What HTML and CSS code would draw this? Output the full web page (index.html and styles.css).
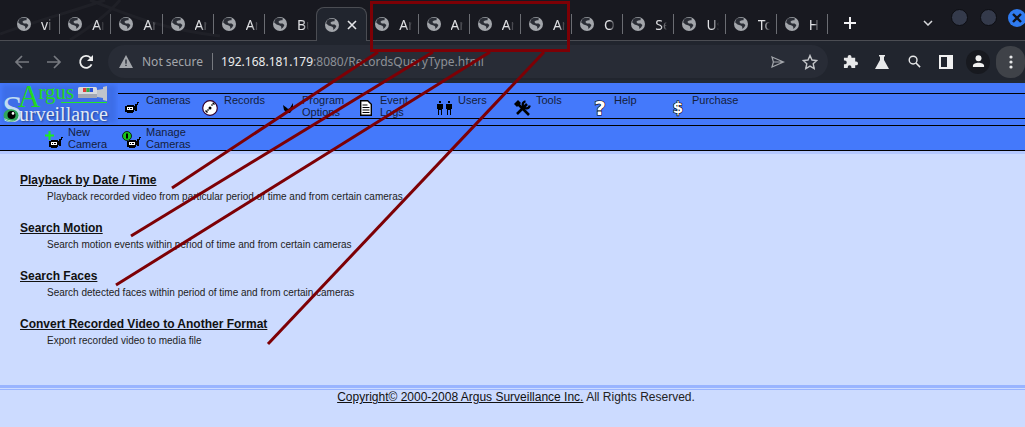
FILE: index.html
```html
<!DOCTYPE html>
<html>
  <head>
    <title>Argus Surveillance</title>
    <link rel="stylesheet" href="styles.css">
  </head>
  <body>
    <svg class="defs" width="0" height="0">
      <symbol id="globe" viewBox="0 0 14 14">
        <circle cx="7" cy="7" r="7" fill="#a3a6ab"/>
        <path d="M3 1.600C5 .6 8 .4 10 1.400L9.200 3.400C7.400 3 6.200 3.800 5.400 5L6.800 6.600 9.600 6.400 11.400 8C10.800 10 9.400 11.200 8.200 12 8.600 10.400 8.200 9 6.600 8.600L3.600 7.400 1.200 5.600C1.400 4 2 2.600 3 1.600Z" fill="#2a2d35"/>
      </symbol>
      <symbol id="camera" viewBox="0 0 14 11">
        <path d="M0 4h2V3h7v1h1V2h2V0h2v1h-1v2h-1v6h-2V8H9v2H8v1H2v-1H0Z" fill="#000"/>
        <path d="M2 5h6v3H2Z" fill="#fff"/>
        <path d="M3 6h1v1H3ZM5 6h2v1H5Z" fill="#000"/>
      </symbol>
    </svg>

    <header class="browser">
      <div class="tabstrip">
        <svg class="dragon" viewBox="0 0 400 40" width="400" height="40">
          <path d="M0 34C40 20 70 12 105 0M70 40C95 24 110 12 120 0M90 0C140 20 170 30 220 36" fill="none" stroke="#1f2027" stroke-width="3"/>
        </svg>
        <div class="tab"><svg class="favicon"><use href="#globe"/></svg><span class="tab-title">vi</span></div>
        <div class="tab"><svg class="favicon"><use href="#globe"/></svg><span class="tab-title">Ar</span></div>
        <div class="tab"><svg class="favicon"><use href="#globe"/></svg><span class="tab-title">Ar</span></div>
        <div class="tab"><svg class="favicon"><use href="#globe"/></svg><span class="tab-title">Ar</span></div>
        <div class="tab"><svg class="favicon"><use href="#globe"/></svg><span class="tab-title">Ar</span></div>
        <div class="tab tab-last"><svg class="favicon"><use href="#globe"/></svg><span class="tab-title">Bu</span></div>
        <div class="tab tab-active">
          <svg class="favicon"><use href="#globe"/></svg>
          <svg class="tab-close" viewBox="0 0 10 10" width="10" height="10"><path d="M1 1l8 8M9 1l-8 8" stroke="#e4e5e8" stroke-width="1.600"/></svg>
        </div>
        <div class="tab"><svg class="favicon"><use href="#globe"/></svg><span class="tab-title">Ar</span></div>
        <div class="tab"><svg class="favicon"><use href="#globe"/></svg><span class="tab-title">Ar</span></div>
        <div class="tab"><svg class="favicon"><use href="#globe"/></svg><span class="tab-title">Ar</span></div>
        <div class="tab"><svg class="favicon"><use href="#globe"/></svg><span class="tab-title">Ar</span></div>
        <div class="tab"><svg class="favicon"><use href="#globe"/></svg><span class="tab-title">O</span></div>
        <div class="tab"><svg class="favicon"><use href="#globe"/></svg><span class="tab-title">Se</span></div>
        <div class="tab"><svg class="favicon"><use href="#globe"/></svg><span class="tab-title">Us</span></div>
        <div class="tab"><svg class="favicon"><use href="#globe"/></svg><span class="tab-title">To</span></div>
        <div class="tab"><svg class="favicon"><use href="#globe"/></svg><span class="tab-title">H</span></div>
        <svg class="new-tab" viewBox="0 0 12 12" width="12" height="12"><path d="M6 0v12M0 6h12" stroke="#f1f1f3" stroke-width="2"/></svg>
        <svg class="tab-search" viewBox="0 0 10 6" width="10" height="6"><path d="M1 1l4 4 4-4" fill="none" stroke="#d8d9dc" stroke-width="1.500"/></svg>
        <span class="win-btn"></span>
        <span class="win-btn"></span>
        <span class="win-btn win-close">
          <svg viewBox="0 0 10 10" width="10" height="10"><path d="M1 1l8 8M9 1l-8 8" stroke="#10131c" stroke-width="2.400"/></svg>
        </span>
      </div>

      <div class="toolbar">
        <span class="tool-btn">
          <svg viewBox="0 0 16 16" width="16" height="16"><path d="M15 8H2M8 2L2 8l6 6" fill="none" stroke="#777a80" stroke-width="1.700"/></svg>
        </span>
        <span class="tool-btn">
          <svg viewBox="0 0 16 16" width="16" height="16"><path d="M1 8h13M8 2l6 6-6 6" fill="none" stroke="#777a80" stroke-width="1.700"/></svg>
        </span>
        <span class="tool-btn">
          <svg viewBox="0 0 16 16" width="16" height="16"><path d="M13.600 10.400A6 6 0 1 1 12.400 3.600L14 5.400" fill="none" stroke="#eceded" stroke-width="1.800"/><path d="M15 1v6H9Z" fill="#eceded"/></svg>
        </span>
        <div class="omnibox">
          <svg class="warn" viewBox="0 0 14 13" width="14" height="13"><path d="M7 0l7 13H0Z" fill="#a3a6ab"/><path d="M6.300 4.500h1.400v4.200H6.300ZM6.300 9.700h1.400v1.400H6.300Z" fill="#2a2e38"/></svg>
          <span class="not-secure">Not secure</span>
          <span class="url"><span class="url-host">192.168.181.179</span>:8080/RecordsQueryType.html</span>
          <svg class="send" viewBox="0 0 14 12" width="14" height="12"><path d="M1 1l11.500 5L1 11l1.400-5ZM2.400 6h10" fill="none" stroke="#a3a6ab" stroke-width="1.200"/></svg>
          <svg class="star" viewBox="0 0 16 16" width="16" height="16"><path d="M8 1.500l2 4.500 4.800.5-3.600 3.200 1 4.800L8 12.100l-4.200 2.400 1-4.800L1.200 6.500 6 6Z" fill="none" stroke="#c4c6c9" stroke-width="1.400"/></svg>
        </div>
        <span class="tool-btn">
          <svg viewBox="0 0 16 16" width="15" height="15"><path d="M1 4h4V3a2 2 0 0 1 4 0v1h4v4h1a2 2 0 0 1 0 4h-1v3H9v-1a2 2 0 0 0-4 0v1H1v-4h1a2 2 0 0 0 0-4H1Z" fill="#e8e9ea"/></svg>
        </span>
        <span class="tool-btn">
          <svg viewBox="0 0 16 16" width="16" height="16"><path d="M5 1h6v1.500h-1V6l5 9H1l5-9V2.500H5Z" fill="#e8e9ea"/></svg>
        </span>
        <span class="tool-btn">
          <svg viewBox="0 0 14 14" width="13" height="13"><circle cx="5.500" cy="5.500" r="4.200" fill="none" stroke="#e8e9ea" stroke-width="1.500"/><path d="M8.600 8.600L13 13" stroke="#e8e9ea" stroke-width="1.700"/></svg>
        </span>
        <span class="tool-btn">
          <svg viewBox="0 0 14 14" width="14" height="14"><path d="M0 0h14v14H0ZM2 2v10h6V2Z" fill="#f1f1f1" fill-rule="evenodd"/></svg>
        </span>
        <span class="tool-btn">
          <span class="avatar">
            <svg viewBox="0 0 14 14" width="13" height="13"><circle cx="7" cy="3.500" r="3.200" fill="#f1f1f1"/><path d="M1 13v-1.500C1 9.500 4 8.300 7 8.300s6 1.200 6 3.200V13Z" fill="#f1f1f1"/></svg>
          </span>
        </span>
        <span class="tool-btn tool-menu">
          <svg viewBox="0 0 4 14" width="4" height="14"><circle cx="2" cy="2" r="1.600" fill="#e8e9ea"/><circle cx="2" cy="7" r="1.600" fill="#e8e9ea"/><circle cx="2" cy="12" r="1.600" fill="#e8e9ea"/></svg>
        </span>
      </div>
    </header>

    <div class="page">
      <div class="banner">
        <div class="logo">
          <span class="logo-big-s">S</span>
          <span class="logo-argus">A<span class="logo-argus-rest">rgus</span></span>
          <span class="logo-rule"></span>
          <span class="logo-surveillance">urveillance</span>
          <svg class="logo-eye" viewBox="0 0 16 13" width="16" height="13">
            <ellipse cx="8" cy="6.500" rx="7.500" ry="6.200" fill="#2fa65a"/>
            <path d="M1 9c2 3 8 4 11 2.500C8 12 4 11 1 9Z" fill="#d8f0e0"/>
            <circle cx="8.500" cy="6" r="4" fill="#000"/>
            <circle cx="10" cy="4.400" r="1.300" fill="#fff"/>
          </svg>
          <svg class="logo-cam" viewBox="0 0 30 15" width="30" height="15">
            <rect x="0" y="1" width="19" height="11" rx="1.500" fill="#d8dade"/>
            <rect x="0" y="8" width="19" height="4" fill="#a4a8b2"/>
            <rect x="5" y="2" width="3.400" height="4" fill="#e03a3a"/>
            <rect x="8.400" y="2" width="3.300" height="4" fill="#32b045"/>
            <rect x="11.700" y="2" width="3.300" height="4" fill="#2a4fd8"/>
            <path d="M19 4l6-1V1l4-1v15l-4-1v-2l-6-1Z" fill="#c0c4cb"/>
          </svg>
        </div>
        <nav class="menu">
          <a class="menu-item"><span class="menu-icon"><svg width="14" height="11"><use href="#camera"/></svg></span><span>Cameras</span></a>
          <a class="menu-item"><span class="menu-icon">
            <svg viewBox="0 0 16 16" width="16" height="16"><circle cx="8" cy="8" r="7.300" fill="#fff" stroke="#300030" stroke-width="1.200"/><circle cx="8" cy="8" r="1.500" fill="#000"/><path d="M3 11l2 2 1-1-2-2ZM10 3l2 2 1-1-1.500-1.500ZM9 5l1 1 1-1-1-1ZM5 10l1 1 1-1-1-1Z" fill="#000"/></svg>
          </span><span>Records</span></a>
          <a class="menu-item"><span class="menu-icon">
            <svg viewBox="0 0 10 10" width="10" height="10"><path d="M0 2l4 3 1 1 2-1 3-5v6l-3 4H4L1 7Z" fill="#000"/></svg>
          </span><span>Program<br>Options</span></a>
          <a class="menu-item"><span class="menu-icon">
            <svg viewBox="0 0 12 16" width="12" height="16"><path d="M.7.700h7l3.600 3.600v11H.7Z" fill="#fff" stroke="#000" stroke-width="1.400"/><path d="M2.500 5h5M2.500 7.500h7M2.500 10h7M2.500 12.500h7" stroke="#000" stroke-width="1"/></svg>
          </span><span>Event<br>Logs</span></a>
          <a class="menu-item"><span class="menu-icon">
            <svg viewBox="0 0 17 14" width="17" height="14"><path d="M3 0h2v2H3ZM1 3h6v5H6v6H5v-5H3v5H2V8H1ZM12 0h2v2h-2ZM10 3h6v5h-1v6h-1v-5h-2v5h-1V8h-1Z" fill="#000"/></svg>
          </span><span>Users</span></a>
          <a class="menu-item"><span class="menu-icon">
            <svg viewBox="0 0 17 16" width="17" height="16"><path d="M0 4l4-4 3 3-4 4Z" fill="#000"/><path d="M4 4l11 11M13 4L3 14" stroke="#000" stroke-width="2.600"/><path d="M11.500 1.200a3.600 3.600 0 1 0 4.300 4.300" fill="none" stroke="#000" stroke-width="2.200"/></svg>
          </span><span>Tools</span></a>
          <a class="menu-item"><span class="menu-icon"><span class="glyph-icon glyph-help">?</span></span><span>Help</span></a>
          <a class="menu-item"><span class="menu-icon"><span class="glyph-icon glyph-dollar">$</span></span><span>Purchase</span></a>
        </nav>
      </div>

      <nav class="submenu">
        <a class="menu-item">
          <span class="menu-icon icon-stack">
            <svg class="stack-badge stack-plus" viewBox="0 0 9 9" width="9" height="9"><path d="M4.500 0v9M0 4.500h9" stroke="#19f019" stroke-width="2"/></svg>
            <svg class="stack-cam" width="14" height="11"><use href="#camera"/></svg>
          </span>
          <span>New<br>Camera</span>
        </a>
        <a class="menu-item">
          <span class="menu-icon icon-stack">
            <svg class="stack-badge stack-manage" viewBox="0 0 10 10" width="10" height="10"><circle cx="5" cy="5" r="4.500" fill="#19c419" stroke="#000" stroke-width=".8"/><path d="M4 2.500h2v5H4Z" fill="#000"/></svg>
            <svg class="stack-cam" width="14" height="11"><use href="#camera"/></svg>
          </span>
          <span>Manage<br>Cameras</span>
        </a>
      </nav>

      <main class="content">
        <section class="entry">
          <a class="entry-title">Playback by Date / Time</a>
          <p class="entry-desc">Playback recorded video from particular period of time and from certain cameras</p>
        </section>
        <section class="entry">
          <a class="entry-title">Search Motion</a>
          <p class="entry-desc">Search motion events within period of time and from certain cameras</p>
        </section>
        <section class="entry">
          <a class="entry-title">Search Faces</a>
          <p class="entry-desc">Search detected faces within period of time and from certain cameras</p>
        </section>
        <section class="entry">
          <a class="entry-title">Convert Recorded Video to Another Format</a>
          <p class="entry-desc">Export recorded video to media file</p>
        </section>
      </main>

      <footer class="footer">
        <a>Copyright© 2000-2008 Argus Surveillance Inc.</a> All Rights Reserved.
      </footer>
    </div>

    <!-- red annotations drawn on top of the screenshot -->
    <svg class="annotations" viewBox="0 0 1025 427" width="1025" height="427">
      <g fill="none" stroke="#7d0005" stroke-width="3">
        <rect x="371.500" y="2.500" width="197" height="48"/>
        <path d="M172 188L378 52"/>
        <path d="M131 236L433 52"/>
        <path d="M116 285L490 52"/>
        <path d="M268 344L544 52"/>
      </g>
    </svg>
  </body>
</html>
```

FILE: styles.css
```css
/* page */
html,
body {
  margin: 0;
  height: 100%;
  overflow: hidden;
}

body {
  font-family: "Liberation Sans", Arial, sans-serif;
  background-color: #ccdbff;
  color: #111;
}

.defs {
  position: absolute;
}

/* browser chrome */
.browser {
  font-family: "Noto Sans", sans-serif;
  font-size: 12px;
}

.tabstrip {
  position: relative;
  display: flex;
  align-items: flex-end;
  height: 40px;
  padding-left: 9px;
  background-color: #181920;
  border-bottom: 1px solid #4b4d53;
}

.dragon {
  position: absolute;
  left: 0;
  top: 0;
}

.tab {
  position: relative;
  display: flex;
  align-items: center;
  flex: 0 0 51.2px;
  min-width: 0;
  box-sizing: border-box;
  height: 33px;
  padding: 1px 7px 0 8px;
  font-size: 14px;
  color: #dfe0e3;
}

.tab::after {
  content: "";
  position: absolute;
  right: 0;
  top: 7px;
  height: 20px;
  width: 1px;
  background-color: #6b6d73;
}

.tab-last::after,
.tab-active::after {
  display: none;
}

.tab-active {
  height: 34px;
  margin-bottom: -1px;
  background-color: #21252e;
  border: 1px solid #4b4d53;
  border-bottom: none;
  border-radius: 8px 8px 0 0;
  padding-left: 8px;
  padding-bottom: 1px;
}

.favicon {
  flex: none;
  width: 14px;
  height: 14px;
  margin-right: 10px;
}

.tab-close {
  flex: none;
  margin-left: -2px;
}

.tab-title {
  overflow: hidden;
  white-space: nowrap;
  min-width: 0;
  -webkit-mask-image: linear-gradient(to right, #000 50%, transparent 100%);
  mask-image: linear-gradient(to right, #000 50%, transparent 100%);
}

.new-tab {
  flex: none;
  margin: 0 0 11px 16px;
}

.tab-search {
  flex: none;
  margin: 0 0 14px 67px;
}

.win-btn {
  flex: none;
  box-sizing: border-box;
  width: 17px;
  height: 17px;
  margin: 0 0 14px 12px;
  border-radius: 50%;
  background-color: #343a4b;
  border: 1px solid #0c0d12;
}

.tab-search + .win-btn {
  margin-left: 18px;
}

.win-close {
  display: flex;
  align-items: center;
  justify-content: center;
  width: 18px;
  height: 18px;
  margin-left: 11px;
  margin-bottom: 13px;
  background-color: #2f7bf0;
  border: none;
}

.toolbar {
  display: flex;
  align-items: center;
  height: 37px;
  padding: 2px 0 0 6px;
  background-color: #21252e;
  overflow: hidden;
}

.tool-btn {
  display: flex;
  flex: none;
  align-items: center;
  justify-content: center;
  width: 32px;
  height: 32px;
}

.avatar {
  display: flex;
  align-items: center;
  justify-content: center;
  width: 24px;
  height: 24px;
  border-radius: 50%;
  background-color: #17191f;
}

.tool-menu {
  width: 29px;
  margin-left: 2px;
  border-radius: 14px;
  background-color: #3f4248;
}

.omnibox {
  flex: 1;
  display: flex;
  align-items: center;
  height: 33px;
  margin: 0 6px;
  padding: 0 10px 0 11px;
  border-radius: 17px;
  background-color: #282c36;
}

.not-secure {
  margin-left: 9px;
  padding-right: 9px;
  border-right: 1px solid #777a80;
  line-height: 17px;
  color: #a3a6ab;
}

.url {
  margin-left: 8px;
  color: #8d9096;
}

.url-host {
  color: #eceded;
}

.send {
  margin-left: auto;
}

.star {
  margin-left: 17px;
}

/* argus page */
.page {
  border-top: 3px solid #222a33;
}

.banner {
  display: flex;
  height: 42px;
  background-color: #4479fb;
}

.logo {
  position: relative;
  flex: 0 0 118px;
  background-color: #3d6ee8;
  box-shadow: inset 0 0 4px 2px #4479fb;
  font-family: "Liberation Serif", serif;
}

.logo-big-s {
  position: absolute;
  left: 2px;
  top: 8px;
  font-size: 38px;
  line-height: 36px;
  color: #bfdcf2;
}

.logo-argus {
  position: absolute;
  left: 18px;
  top: 2px;
  font-size: 31px;
  line-height: 24px;
  color: #22d822;
}

.logo-argus-rest {
  margin-left: -2px;
  font-size: 21px;
  line-height: 0;
  vertical-align: 8px;
}

.logo-rule {
  position: absolute;
  left: 61px;
  top: 19px;
  width: 46px;
  height: 1px;
  background-color: #22e822;
}

.logo-surveillance {
  position: absolute;
  left: 19px;
  top: 19px;
  font-size: 20px;
  line-height: 24px;
  color: #e0e9f6;
  text-shadow: 1px 1px 2px #24408c;
}

.logo-eye {
  position: absolute;
  left: 3px;
  top: 26px;
}

.logo-cam {
  position: absolute;
  left: 78px;
  top: 3px;
}

.menu {
  flex: 1;
  display: flex;
  height: 24px;
  margin-top: 10px;
  border-top: 1px solid #000;
  border-bottom: 1px solid #000;
}

.submenu {
  display: flex;
  height: 24px;
  padding-left: 40px;
  background-color: #4479fb;
  border-top: 1px solid #000;
  border-bottom: 1px solid #000;
}

.menu-item {
  display: flex;
  flex: 0 0 78px;
  font-size: 11px;
  line-height: 12px;
  color: #14203c;
}

.menu-icon {
  display: flex;
  flex: 0 0 28px;
  align-items: center;
  justify-content: center;
  height: 100%;
  padding-top: 3px;
  box-sizing: border-box;
}

.glyph-icon {
  font-family: "DejaVu Sans", sans-serif;
  font-weight: bold;
  color: #fff;
  -webkit-text-stroke: 1.2px #000;
  paint-order: stroke fill;
}

.glyph-help {
  font-size: 20px;
}

.glyph-dollar {
  font-size: 15px;
}

.icon-stack {
  position: relative;
  padding-top: 0;
}

.stack-badge {
  position: absolute;
}

.stack-plus {
  left: 5px;
  top: 5px;
}

.stack-manage {
  left: 4px;
  top: 5px;
}

.stack-cam {
  position: absolute;
  left: 9px;
  top: 11px;
}

.content {
  height: 234px;
  padding: 18px 0 0 20px;
  box-sizing: border-box;
  background-color: #ccdbff;
  border-top: 3px solid #b4c8ff;
}

.entry {
  height: 48px;
}

.entry-title {
  display: block;
  font-size: 12px;
  font-weight: bold;
  line-height: 16px;
  text-decoration: underline;
  color: #111;
}

.entry-desc {
  margin: 2px 0 0 27px;
  font-size: 10px;
  line-height: 14px;
  color: #222;
}

.footer {
  padding-top: 1px;
  text-align: center;
  font-size: 12px;
  line-height: 14px;
  padding-left: 7px;
  border-top: 3px solid #99b4ff;
  color: #222;
}

.footer a {
  text-decoration: underline;
  color: #111;
}

.footer::before {
  content: "";
  display: block;
  height: 1px;
  margin-left: -7px;
  background-color: #99b4ff;
}

.annotations {
  position: absolute;
  left: 0;
  top: 0;
  pointer-events: none;
}
```
